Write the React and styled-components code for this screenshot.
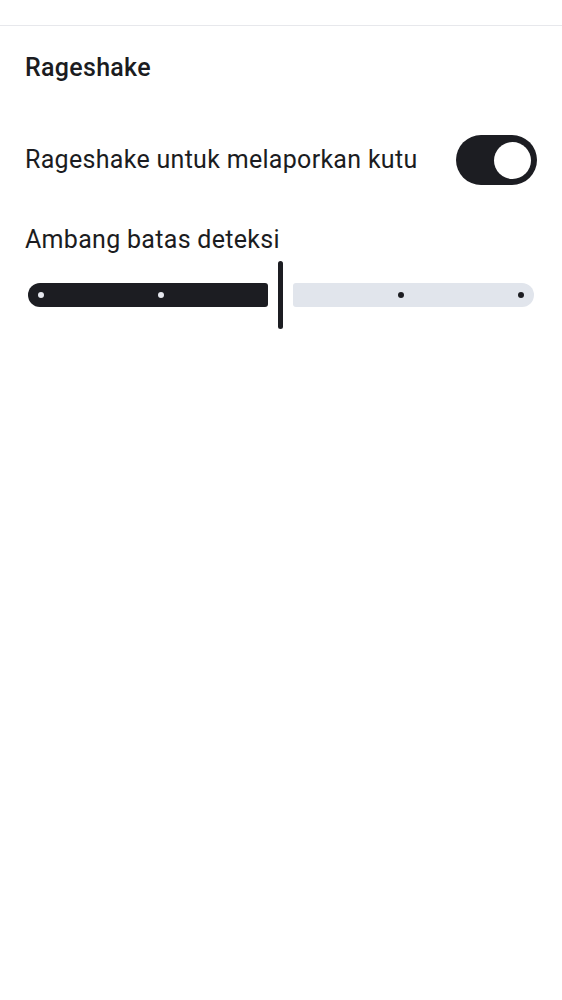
import React, { useState } from "react";
import styled, { createGlobalStyle } from "styled-components";

const Global = createGlobalStyle`
  html, body { margin: 0; padding: 0; background: #ffffff; }
  body { font-family: Roboto, "Noto Sans", sans-serif; color: #1b1c21; }
`;

const Page = styled.div`
  width: 562px;
  min-height: 1000px;
  background: #fff;
`;

const TopBar = styled.div`
  height: 25px;
  border-bottom: 1px solid #e7e8ec;
`;

const Content = styled.div`
  padding: 0 25px 0 25px;
  display: flex;
  flex-direction: column;
`;

const SectionTitle = styled.h2`
  margin: 0;
  padding-top: 26px;
  font-size: 25px;
  line-height: 32px;
  font-weight: 500;
  letter-spacing: 0.3px;
`;

const ToggleRow = styled.div`
  display: flex;
  align-items: center;
  justify-content: space-between;
  margin-top: 51px;
  height: 50px;
`;

const Label = styled.span`
  font-size: 25px;
  line-height: 32px;
  letter-spacing: 0.3px;
`;

const Switch = styled.button`
  width: 81px;
  height: 50px;
  border-radius: 25px;
  border: none;
  padding: 0 6px;
  background: ${(p) => (p.$on ? "#1c1d22" : "#e1e5ec")};
  display: flex;
  align-items: center;
  justify-content: ${(p) => (p.$on ? "flex-end" : "flex-start")};
  cursor: pointer;
`;

const Thumb = styled.span`
  width: 37px;
  height: 37px;
  border-radius: 50%;
  background: #ffffff;
`;

const SliderLabel = styled.span`
  margin-top: 39px;
  font-size: 25px;
  line-height: 32px;
  letter-spacing: 0.3px;
`;

const SliderWrap = styled.div`
  position: relative;
  margin: 5px 3px 0 3px;
  height: 68px;
  display: flex;
  align-items: center;
`;

const Track = styled.div`
  height: 24px;
  background: ${(p) => (p.$active ? "#1c1d22" : "#e1e5ec")};
  border-radius: ${(p) => (p.$active ? "12px 3px 3px 12px" : "3px 12px 12px 3px")};
  flex: ${(p) => p.$grow};
`;

const Handle = styled.div`
  width: 5px;
  height: 68px;
  border-radius: 3px;
  background: #1c1d22;
  margin: 0 10px;
  flex-shrink: 0;
`;

const Tick = styled.span`
  position: absolute;
  top: 50%;
  width: 6px;
  height: 6px;
  margin: -3px 0 0 -3px;
  border-radius: 50%;
  background: ${(p) => (p.$active ? "#e6e8ee" : "#1c1d22")};
`;

export default function App() {
  const [on, setOn] = useState(true);
  const value = 2;
  const stops = [0, 1, 2, 3, 4];
  const width = 506;
  const inset = 13;
  const tickX = (i) => inset + (i * (width - 2 * inset)) / 4;
  return (
    <Page>
      <Global />
      <TopBar />
      <Content>
        <SectionTitle>Rageshake</SectionTitle>
        <ToggleRow>
          <Label>Rageshake untuk melaporkan kutu</Label>
          <Switch $on={on} onClick={() => setOn(!on)} aria-pressed={on}>
            <Thumb />
          </Switch>
        </ToggleRow>
        <SliderLabel>Ambang batas deteksi</SliderLabel>
        <SliderWrap>
          <Track $active $grow={"0 0 240px"} />
          <Handle />
          <Track $grow={"1 1 auto"} />
          {stops
            .filter((i) => i !== value)
            .map((i) => (
              <Tick key={i} $active={i < value} style={{ left: tickX(i) }} />
            ))}
        </SliderWrap>
      </Content>
    </Page>
  );
}
